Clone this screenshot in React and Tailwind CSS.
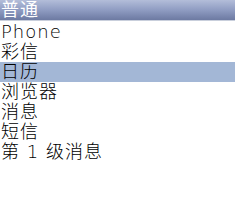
export default function App() {
  const items = ["Phone", "彩信", "日历", "浏览器", "消息", "短信", "第 1 级消息"]
  const selected = 2

  return (
    <div
      className="w-[235px] h-[219px] bg-white overflow-hidden"
      style={{ fontFamily: '"DejaVu Sans", "Noto Sans CJK SC", sans-serif' }}
    >
      {/* title bar */}
      <div className="h-[21px] bg-gradient-to-b from-[#b3bdd9] via-[#8f9cc2] to-[#6d7aa2] border-b border-[#c9cfdc] flex items-center px-[1px]">
        <span className="text-white text-[18px] leading-none tracking-[1px]">普通</span>
      </div>

      <div className="flex flex-col pt-[1px]">
        {items.map((item, i) => (
          <div
            key={item}
            className={
              "h-[20px] flex items-center px-[1px] text-[18px] leading-none font-light tracking-[1px] text-black " +
              (i === selected ? "bg-[#a3b7d6]" : "")
            }
          >
            {item}
          </div>
        ))}
      </div>
    </div>
  )
}
